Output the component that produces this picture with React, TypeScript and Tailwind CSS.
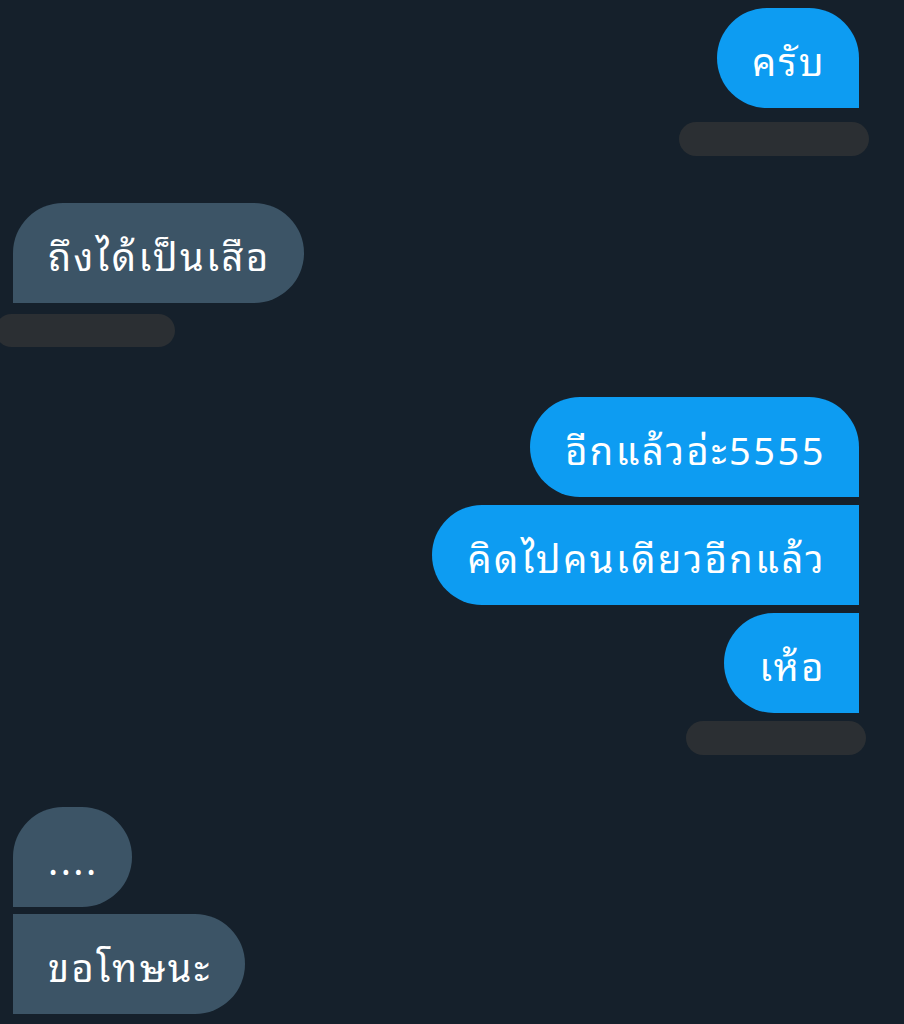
export default function App() {
  const font = {
    fontFamily:
      '"Noto Sans Thai Looped", "Garuda", "Loma", "Tlwg Typo", "Kinnari", "Norasi", "Noto Sans", sans-serif',
  };
  const text = 'h-[100px] flex items-center pl-[35px] pr-[33px] text-[38px] tracking-[2.5px]';
  return (
    <div className="w-[904px] h-[1024px] overflow-hidden bg-[#15202b] text-white" style={font}>
      <div className="flex flex-col pt-[8px]">
        {/* sent */}
        <div className="flex flex-col items-end pr-[45px]">
          <div className={`${text} bg-[#0d9cf2] rounded-tl-[50px] rounded-bl-[50px] rounded-tr-[50px]`}>
            ครับ
          </div>
          <div className="mt-[14px] mr-[-10px] w-[190px] h-[34px] rounded-full bg-[#2b2f33]" />
        </div>

        {/* received */}
        <div className="flex flex-col items-start mt-[47px]">
          <div className={`${text} ml-[13px] bg-[#3c5466] rounded-tl-[50px] rounded-tr-[50px] rounded-br-[50px]`}>
            ถึงได้เป็นเสือ
          </div>
          <div className="mt-[11px] ml-[-5px] w-[180px] h-[33px] rounded-full bg-[#2b2f33]" />
        </div>

        {/* sent group */}
        <div className="flex flex-col items-end pr-[45px] mt-[50px] gap-[8px]">
          <div className={`${text} bg-[#0d9cf2] rounded-tl-[50px] rounded-bl-[50px] rounded-tr-[50px]`}>
            อีกแล้วอ่ะ5555
          </div>
          <div className={`${text} bg-[#0d9cf2] rounded-l-[50px]`}>
            คิดไปคนเดียวอีกแล้ว
          </div>
          <div className={`${text} bg-[#0d9cf2] rounded-l-[50px]`}>
            เห้อ
          </div>
          <div className="mr-[-7px] w-[180px] h-[34px] rounded-full bg-[#2b2f33]" />
        </div>

        {/* received group */}
        <div className="flex flex-col items-start pl-[13px] mt-[52px] gap-[7px]">
          <div className={`${text} bg-[#3c5466] rounded-tl-[50px] rounded-tr-[50px] rounded-br-[50px]`}>
            ....
          </div>
          <div className={`${text} bg-[#3c5466] rounded-r-[50px]`}>
            ขอโทษนะ
          </div>
        </div>
      </div>
    </div>
  );
}
